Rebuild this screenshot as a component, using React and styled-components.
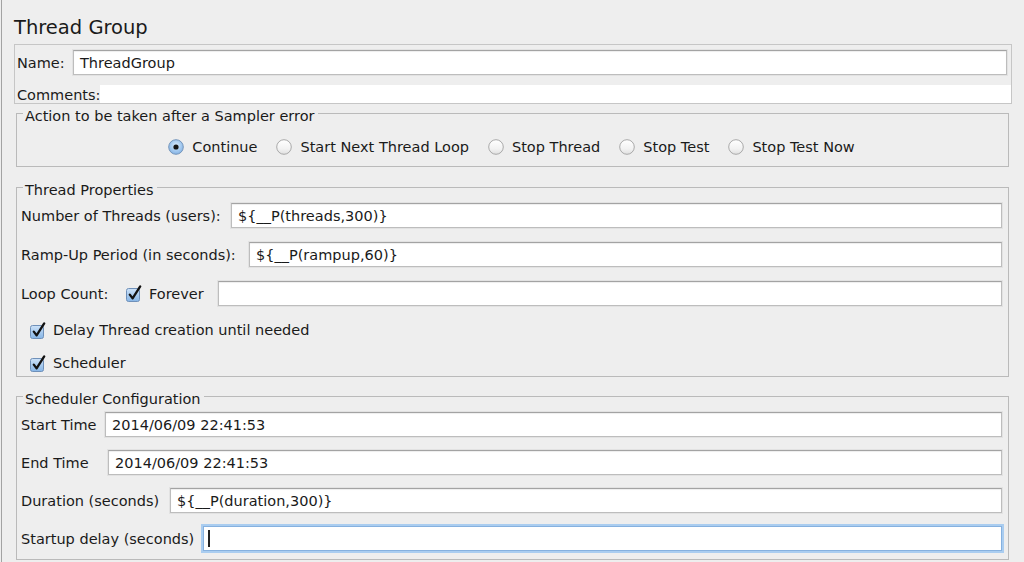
import React from "react";
import styled, { createGlobalStyle } from "styled-components";

const GlobalStyle = createGlobalStyle`
  html, body { margin: 0; padding: 0; background: #eeeeee; }
  body {
    font-family: "DejaVu Sans", Verdana, sans-serif;
    font-size: 14.5px;
    color: #1a1a1a;
  }
  * { box-sizing: border-box; }
`;

const Page = styled.div`
  width: 1023px;
  height: 562px;
  margin-left: 1px;
  border-left: 1px solid #a3a3a3;
  padding: 0 12px;
  overflow: hidden;
  display: flex;
  flex-direction: column;
`;

const Title = styled.h1`
  margin: 0 0 4px 0;
  padding-top: 16px;
  height: 40px;
  font-size: 19.5px;
  line-height: 24px;
  font-weight: normal;
  color: #1a1a1a;
`;

const NameBox = styled.div`
  height: 60px;
  border: 1px solid #c6c6c6;
  display: flex;
  flex-direction: column;
`;

const NameRow = styled.div`
  display: flex;
  align-items: center;
  margin-top: 5px;
  padding: 0 4px 0 2px;
  height: 25px;
`;

const CommentsRow = styled.div`
  display: flex;
  align-items: flex-end;
  margin-top: 10px;
  padding-left: 2px;
  height: 18px;
  line-height: 16px;
`;

const CommentsArea = styled.div`
  flex: 1;
  align-self: stretch;
  height: 18px;
  background: #ffffff;
`;

const Label = styled.span`
  flex: none;
  width: ${(p) => (p.$w ? `${p.$w}px` : "auto")};
  white-space: nowrap;
`;

const Field = styled.div`
  flex: 1;
  height: 25px;
  display: flex;
  align-items: center;
  padding-left: ${(p) => (p.$focus ? 4 : 6)}px;
  background: #ffffff;
  border: 1px solid ${(p) => (p.$focus ? "#86b1df" : "#bdbdbd")};
  border-top-color: ${(p) => (p.$focus ? "#86b1df" : "#a3a3a3")};
  box-shadow: ${(p) =>
    p.$focus
      ? "0 0 0 2px #aacdf0"
      : "inset 0 1px 1px rgba(0,0,0,0.07), 0 0 0 1px #e2e2e2"};
  white-space: nowrap;
  overflow: hidden;
`;

const Caret = styled.span`
  display: inline-block;
  width: 2px;
  height: 17px;
  background: #222;
`;

const Group = styled.fieldset`
  margin: ${(p) => p.$top || 0}px 3px 0 2px;
  padding: 0 6px 0 4px;
  min-inline-size: 0;
  border: 1px solid #bababa;
`;

const Legend = styled.legend`
  margin-left: 2px;
  padding: 6px 3px 0 2px;
  font-size: 14.5px;
  line-height: 18px;
  color: #1a1a1a;
`;

const GroupBody = styled.div`
  display: flex;
  flex-direction: column;
  padding: ${(p) => p.$pt}px 0 ${(p) => p.$pb}px 0;
  gap: ${(p) => p.$gap || 0}px;
`;

const RadioRow = styled.div`
  height: 18px;
  display: flex;
  align-items: center;
  justify-content: center;
  gap: 19px;
`;

const OptionItem = styled.label`
  display: flex;
  align-items: center;
  gap: ${(p) => p.$gap || 8}px;
  white-space: nowrap;
  flex: none;
  width: ${(p) => (p.$w ? `${p.$w}px` : "auto")};
`;

const FormRow = styled.div`
  display: flex;
  align-items: center;
  height: 25px;
  margin-top: ${(p) => p.$mt || 0}px;
`;

const CheckRow = styled.div`
  display: flex;
  align-items: center;
  height: 24px;
  margin-top: ${(p) => p.$mt}px;
  padding-left: 9px;
`;

const RadioIcon = ({ checked }) => (
  <svg width="16" height="16" viewBox="0 0 16 16" style={{ flex: "none" }}>
    <defs>
      <linearGradient id="radioOff" x1="0" y1="0" x2="0" y2="1">
        <stop offset="0" stopColor="#ffffff" />
        <stop offset="0.6" stopColor="#f3f3f3" />
        <stop offset="1" stopColor="#e0e0e0" />
      </linearGradient>
      <radialGradient id="radioOn" cx="0.5" cy="0.4" r="0.65">
        <stop offset="0" stopColor="#dcecfb" />
        <stop offset="0.5" stopColor="#a9cdf1" />
        <stop offset="1" stopColor="#7eaee2" />
      </radialGradient>
    </defs>
    <circle
      cx="8"
      cy="8"
      r="7.3"
      fill={checked ? "url(#radioOn)" : "url(#radioOff)"}
      stroke={checked ? "#7696bb" : "#a9a9a9"}
      strokeWidth="1"
    />
    {checked && <circle cx="8" cy="8" r="2.6" fill="#141414" />}
  </svg>
);

const CheckIcon = () => (
  <svg width="17" height="17" viewBox="0 0 17 17" style={{ flex: "none" }}>
    <defs>
      <linearGradient id="checkOn" x1="0" y1="0" x2="0" y2="1">
        <stop offset="0" stopColor="#cde2f8" />
        <stop offset="1" stopColor="#86b5e6" />
      </linearGradient>
    </defs>
    <rect
      x="0.5"
      y="3.5"
      width="13"
      height="13"
      rx="2"
      fill="url(#checkOn)"
      stroke="#6f90b9"
      strokeWidth="1"
    />
    <path
      d="M3.8 9.6 L6.6 13.4 L14.2 1.4"
      fill="none"
      stroke="#111"
      strokeWidth="2.3"
      strokeLinecap="round"
      strokeLinejoin="round"
    />
  </svg>
);

const radios = [
  { label: "Continue", checked: true },
  { label: "Start Next Thread Loop" },
  { label: "Stop Thread" },
  { label: "Stop Test" },
  { label: "Stop Test Now" },
];

export default function App() {
  return (
    <>
      <GlobalStyle />
      <Page>
        <Title>Thread Group</Title>
        <NameBox>
          <NameRow>
            <Label $w={56}>Name:</Label>
            <Field>ThreadGroup</Field>
          </NameRow>
          <CommentsRow>
            <Label $w={83}>Comments:</Label>
            <CommentsArea />
          </CommentsRow>
        </NameBox>

        <Group $top={-3}>
          <Legend>Action to be taken after a Sampler error</Legend>
          <GroupBody $pt={13} $pb={10}>
            <RadioRow>
              {radios.map((r) => (
                <OptionItem key={r.label}>
                  <RadioIcon checked={r.checked} />
                  {r.label}
                </OptionItem>
              ))}
            </RadioRow>
          </GroupBody>
        </Group>

        <Group $top={8}>
          <Legend>Thread Properties</Legend>
          <GroupBody $pt={4} $pb={1}>
            <FormRow>
              <Label $w={210}>Number of Threads (users):</Label>
              <Field>{"${__P(threads,300)}"}</Field>
            </FormRow>
            <FormRow $mt={14}>
              <Label $w={228}>Ramp-Up Period (in seconds):</Label>
              <Field>{"${__P(rampup,60)}"}</Field>
            </FormRow>
            <FormRow $mt={14}>
              <Label $w={105}>Loop Count:</Label>
              <OptionItem $gap={6} $w={92}>
                <CheckIcon />
                Forever
              </OptionItem>
              <Field />
            </FormRow>
            <CheckRow $mt={12}>
              <OptionItem $gap={6}>
                <CheckIcon />
                Delay Thread creation until needed
              </OptionItem>
            </CheckRow>
            <CheckRow $mt={9}>
              <OptionItem $gap={6}>
                <CheckIcon />
                Scheduler
              </OptionItem>
            </CheckRow>
          </GroupBody>
        </Group>

        <Group $top={7}>
          <Legend>Scheduler Configuration</Legend>
          <GroupBody $pt={4} $pb={8} $gap={13}>
            <FormRow>
              <Label $w={84}>Start Time</Label>
              <Field>2014/06/09 22:41:53</Field>
            </FormRow>
            <FormRow>
              <Label $w={87}>End Time</Label>
              <Field>2014/06/09 22:41:53</Field>
            </FormRow>
            <FormRow>
              <Label $w={149}>Duration (seconds)</Label>
              <Field>{"${__P(duration,300)}"}</Field>
            </FormRow>
            <FormRow>
              <Label $w={182}>Startup delay (seconds)</Label>
              <Field $focus>
                <Caret />
              </Field>
            </FormRow>
          </GroupBody>
        </Group>
      </Page>
    </>
  );
}
